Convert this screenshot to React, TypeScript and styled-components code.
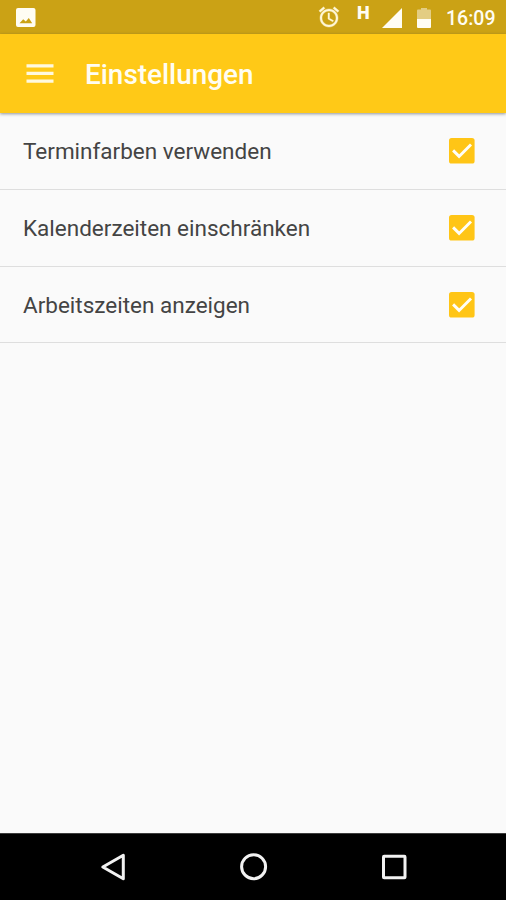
import React from "react";
import styled, { createGlobalStyle } from "styled-components";

const GlobalStyle = createGlobalStyle`
  * { box-sizing: border-box; }
  body { margin: 0; background: #fafafa; font-family: Roboto, "Noto Sans", sans-serif; }
  svg { display: block; flex: none; }
`;

const Screen = styled.div`
  display: flex;
  flex-direction: column;
  width: 506px;
  height: 900px;
  overflow: hidden;
  background: #fafafa;
`;

const StatusBar = styled.header`
  display: flex;
  align-items: center;
  justify-content: space-between;
  flex: none;
  height: 34px;
  padding: 0 11px 0 16px;
  background: #cba215;
  color: #fffdf3;
`;

const StatusIcons = styled.div`
  display: flex;
  align-items: center;
  height: 34px;
`;

const Clock = styled.time`
  width: 49px;
  margin-left: 15px;
  padding-top: 3px;
  font-size: 19.5px;
  font-weight: 500;
  line-height: 34px;
  white-space: nowrap;
`;

const Toolbar = styled.div`
  display: flex;
  align-items: center;
  flex: none;
  height: 79px;
  padding-left: 26px;
  gap: 31px;
  background: #ffc917;
  box-shadow: 0 1px 3px rgba(40, 50, 60, 0.5);
`;

const MenuButton = styled.button`
  padding: 0;
  border: 0;
  background: none;
`;

const Title = styled.h1`
  margin: 0;
  padding-top: 3px;
  color: #fffdf2;
  font-size: 27.9px;
  font-weight: 500;
  line-height: 36px;
`;

const Settings = styled.main`
  flex: 1;
`;

const SettingRow = styled.label`
  display: flex;
  align-items: center;
  justify-content: space-between;
  height: 77px;
  padding: 0 31px 0 23px;
  border-bottom: 1px solid #dedede;

  &:last-child {
    height: 76px;
    padding-top: 1px;
  }
`;

const SettingLabel = styled.span`
  padding-bottom: 1px;
  color: #444;
  font-size: 22.5px;
  line-height: 30px;
`;

const NavBar = styled.nav`
  display: flex;
  align-items: center;
  justify-content: space-between;
  flex: none;
  height: 67px;
  padding: 0 99px 0 100px;
  background: #000;
  border-top: 1px solid #3c3c3c;
`;

const PictureIcon = () => (
  <svg width="20" height="19" viewBox="0 0 20 19">
    <path
      fill="#fffdf3"
      fillRule="evenodd"
      d="M2 0h15.500a2 2 0 0 1 2 2v15a2 2 0 0 1-2 2H2a2 2 0 0 1-2-2V2a2 2 0 0 1 2-2ZM3.500 15.200h12.700l-3.400-5.200-3 3.400-2.600-2.200Z"
    />
  </svg>
);

const AlarmIcon = () => (
  <svg width="24" height="24" viewBox="0 0 24 24" fill="#fff7d8" stroke="#fff7d8" strokeWidth=".4">
    <path d="M22 5.720l-4.600-3.860-1.290 1.530 4.600 3.860L22 5.720zM7.880 3.390L6.600 1.860 2 5.710l1.290 1.530 4.590-3.850zM12.500 8H11v6l4.750 2.850.75-1.230-4-2.370V8zM12 4c-4.970 0-9 4.030-9 9s4.020 9 9 9c4.970 0 9-4.030 9-9s-4.030-9-9-9zm0 16c-3.870 0-7-3.130-7-7s3.130-7 7-7 7 3.130 7 7-3.130 7-7 7z" />
  </svg>
);

const NetworkType = styled.span`
  align-self: flex-start;
  width: 14px;
  margin: 5px 11px 0 16px;
  font-size: 18px;
  font-weight: 900;
  line-height: 16px;
`;

const SignalIcon = () => (
  <svg width="20" height="20" viewBox="0 0 20 20">
    <path d="M0 20 20 0v20Z" fill="#fffdf3" />
  </svg>
);

const IconSlot = styled.span<{ $before?: number; $drop?: number }>`
  margin-left: ${(p) => p.$before ?? 0}px;
  padding-top: ${(p) => p.$drop ?? 0}px;
`;

const BatteryIcon = () => (
  <svg width="14" height="20" viewBox="0 0 14 20">
    <path d="M4 0h6v1.500h3a1 1 0 0 1 1 1V11H0V2.500a1 1 0 0 1 1-1h3Z" fill="#e3cd83" />
    <path d="M0 11h14v8a1 1 0 0 1-1 1H1a1 1 0 0 1-1-1Z" fill="#fffdf3" />
  </svg>
);

const MenuIcon = () => (
  <svg width="28" height="20" viewBox="0 0 28 20" fill="#fff9df">
    <path d="M.5.300h27v3.300H.5ZM.5 7.800h27v3.300H.5ZM.5 15.500h27v3.300H.5Z" />
  </svg>
);

const CheckIcon = () => (
  <svg width="26" height="26" viewBox="0 0 26 26">
    <rect width="25.600" height="25.600" rx="2.600" fill="#ffc516" />
    <path d="m4.100 12.400 6 6L22 6.400" fill="none" stroke="#fffef8" strokeWidth="2.900" />
  </svg>
);

const BackIcon = () => (
  <svg width="26" height="30" viewBox="0 0 26 30">
    <path d="M23.300 3.200v23.600L2.800 15Z" fill="none" stroke="#f2f2f2" strokeWidth="3" strokeLinejoin="round" />
  </svg>
);

const HomeIcon = () => (
  <svg width="28" height="28" viewBox="0 0 28 28">
    <circle cx="13.600" cy="13.700" r="12" fill="none" stroke="#f2f2f2" strokeWidth="3" />
  </svg>
);

const RecentsIcon = () => (
  <svg width="26" height="26" viewBox="0 0 26 26">
    <rect x="2.500" y="2.300" width="21.500" height="21.500" rx=".6" fill="none" stroke="#f2f2f2" strokeWidth="3" />
  </svg>
);

const settings = ["Terminfarben verwenden", "Kalenderzeiten einschränken", "Arbeitszeiten anzeigen"];

export default function App() {
  return (
    <Screen>
      <GlobalStyle />
      <StatusBar>
        <PictureIcon />
        <StatusIcons>
          <AlarmIcon />
          <NetworkType>H</NetworkType>
          <IconSlot $drop={2}>
            <SignalIcon />
          </IconSlot>
          <IconSlot $before={15} $drop={2}>
            <BatteryIcon />
          </IconSlot>
          <Clock>16:09</Clock>
        </StatusIcons>
      </StatusBar>
      <Toolbar>
        <MenuButton aria-label="Menü">
          <MenuIcon />
        </MenuButton>
        <Title>Einstellungen</Title>
      </Toolbar>
      <Settings>
        {settings.map((name) => (
          <SettingRow key={name}>
            <SettingLabel>{name}</SettingLabel>
            <CheckIcon />
          </SettingRow>
        ))}
      </Settings>
      <NavBar>
        <BackIcon />
        <HomeIcon />
        <RecentsIcon />
      </NavBar>
    </Screen>
  );
}
